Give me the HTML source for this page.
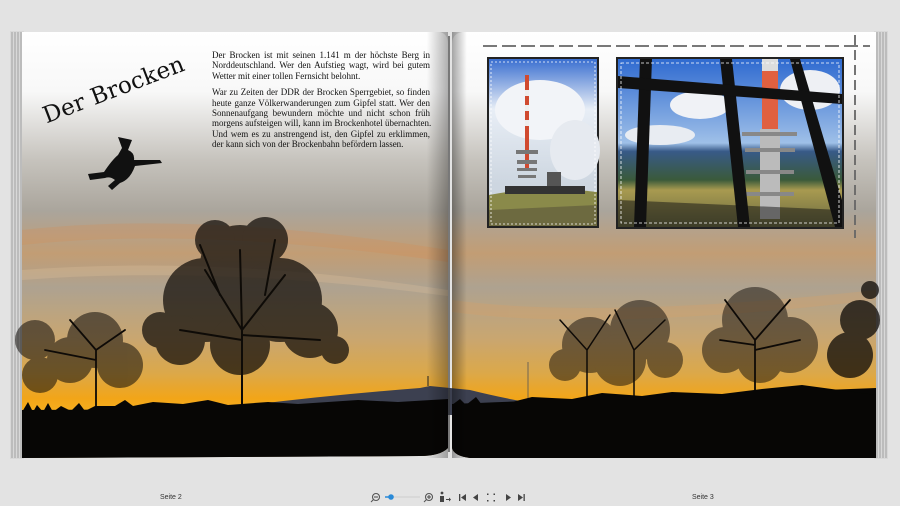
<!DOCTYPE html>
<html><head><meta charset="utf-8"><style>
html,body{margin:0;padding:0;width:900px;height:506px;overflow:hidden;background:#e3e3e3;font-family:"Liberation Sans",sans-serif}
svg{position:absolute;left:0;top:0}
.txt{position:absolute;left:212px;top:50px;width:218px;font-family:"Liberation Serif",serif;font-size:9px;line-height:10.4px;color:#111}
.txt div{text-align:justify;text-align-last:justify;white-space:nowrap;height:10.4px;overflow:visible}
.txt div.l{text-align-last:left}
.gap{height:6px!important}
.title{position:absolute;left:44px;top:104px;font-family:"DejaVu Serif",serif;font-size:23px;color:#111;transform:rotate(-21deg);transform-origin:0 50%;letter-spacing:0.2px}
.lbl{position:absolute;top:494px;font-size:7px;color:#333}
</style></head><body>
<svg width="900" height="506" viewBox="0 0 900 506">
<defs>
<linearGradient id="sky" x1="0" y1="0" x2="0" y2="1">
<stop offset="0" stop-color="#ffffff"/>
<stop offset="0.14" stop-color="#f8f8f8"/>
<stop offset="0.3" stop-color="#c6c3bd"/>
<stop offset="0.42" stop-color="#aaa59c"/>
<stop offset="0.52" stop-color="#c29d74"/>
<stop offset="0.6" stop-color="#aea290"/>
<stop offset="0.72" stop-color="#c9a670"/>
<stop offset="0.8" stop-color="#dba84a"/>
<stop offset="0.86" stop-color="#f2a518"/>
<stop offset="0.9" stop-color="#f7b020"/>
<stop offset="1" stop-color="#3a2a10"/>
</linearGradient>
<linearGradient id="spineL" x1="0" x2="1">
<stop offset="0.95" stop-color="#000" stop-opacity="0"/>
<stop offset="1" stop-color="#000" stop-opacity="0.3"/>
</linearGradient>
<linearGradient id="spineR" x1="0" x2="1">
<stop offset="0" stop-color="#000" stop-opacity="0.35"/>
<stop offset="0.035" stop-color="#000" stop-opacity="0"/>
</linearGradient>
<linearGradient id="p1sky" x1="0" y1="0" x2="0" y2="1"><stop offset="0" stop-color="#3a6fd0"/><stop offset="0.3" stop-color="#e8eef6"/><stop offset="0.75" stop-color="#cdd6e0"/></linearGradient>
<linearGradient id="p2sky" x1="0" y1="0" x2="0" y2="1"><stop offset="0" stop-color="#2f6ad0"/><stop offset="0.5" stop-color="#9fc0e8"/><stop offset="0.55" stop-color="#385a88"/><stop offset="0.72" stop-color="#3a5a3a"/><stop offset="0.78" stop-color="#a89a50"/><stop offset="1" stop-color="#6a6a40"/></linearGradient>
</defs>
<rect x="10" y="31" width="14" height="428" fill="#d8d8d8"/>
<g stroke="#a0a0a0" stroke-width="1"><line x1="12" y1="32" x2="12" y2="458"/><line x1="15" y1="32" x2="15" y2="458"/><line x1="18" y1="32" x2="18" y2="458"/><line x1="21" y1="32" x2="21" y2="458"/></g>
<rect x="874" y="31" width="14" height="428" fill="#d8d8d8"/>
<g stroke="#a0a0a0" stroke-width="1"><line x1="877" y1="32" x2="877" y2="458"/><line x1="880" y1="32" x2="880" y2="458"/><line x1="883" y1="32" x2="883" y2="458"/><line x1="886" y1="32" x2="886" y2="458"/></g>
<path d="M22 32 L440 32 Q448 34 448 44 L448 448 Q440 456 420 456 L22 458 Z" fill="url(#sky)"/>
<path d="M452 44 Q452 34 462 32 L876 32 L876 458 L470 458 Q454 456 452 448 Z" fill="url(#sky)"/>
<g opacity="0.25">
<path d="M22 230 Q200 210 448 250 L448 262 Q200 226 22 245Z" fill="#d88a50"/>
<path d="M452 300 Q600 320 876 290 L876 300 Q600 332 452 312Z" fill="#e0a060"/>
<path d="M22 270 Q220 255 448 290 L448 296 Q220 265 22 280Z" fill="#e8c8a0"/>
</g>
<path d="M250 405 Q330 395 420 388 L430 386 L470 390 Q510 400 560 408 L560 415 L250 415Z" fill="#3c4050"/>
<line x1="428" y1="386" x2="428" y2="376" stroke="#222" stroke-width="1"/>
<line x1="528" y1="400" x2="528" y2="362" stroke="#555" stroke-width="0.8"/>
<path d="M22 410 L448 408 L448 448 Q440 456 420 456 L22 458Z" fill="#070605"/>
<path d="M452 404 Q600 398 700 395 L876 388 L876 458 L470 458 Q454 456 452 448Z" fill="#070605"/>
<g stroke="#0c0906" fill="none" stroke-linecap="round">
<path d="M242 410 L242 330 L205 270 M242 330 L285 275 M242 340 L180 330 M242 335 L320 340 M220 295 L200 245 M265 295 L275 240 M242 330 L240 250" stroke-width="2"/>
<path d="M96 410 L96 350 L70 320 M96 350 L125 330 M96 360 L45 350" stroke-width="1.8"/>
<path d="M587 402 L587 350 L560 320 M587 350 L610 315 M634 400 L634 350 L615 310 M634 350 L665 320" stroke-width="1.5"/>
<path d="M755 398 L755 340 L725 300 M755 340 L790 300 M755 350 L800 340 M755 345 L720 340" stroke-width="1.8"/>
</g>
<g fill="#100c08" opacity="0.72">
<circle cx="240" cy="265" r="40"/><circle cx="205" cy="300" r="42"/><circle cx="280" cy="300" r="42"/>
<circle cx="215" cy="240" r="20"/><circle cx="265" cy="240" r="23"/><circle cx="310" cy="330" r="28"/>
<circle cx="180" cy="340" r="25"/><circle cx="240" cy="345" r="30"/><circle cx="335" cy="350" r="14"/>
<circle cx="160" cy="330" r="18"/>
</g>
<g fill="#100c08" opacity="0.55">
<circle cx="95" cy="340" r="28"/><circle cx="70" cy="360" r="23"/><circle cx="120" cy="365" r="23"/><circle cx="35" cy="340" r="20"/><circle cx="40" cy="375" r="18"/>
</g>
<g fill="#100c08" opacity="0.5">
<circle cx="590" cy="345" r="28"/><circle cx="640" cy="330" r="30"/><circle cx="620" cy="360" r="26"/><circle cx="665" cy="360" r="18"/><circle cx="565" cy="365" r="16"/>
<circle cx="755" cy="320" r="33"/><circle cx="790" cy="345" r="28"/><circle cx="725" cy="350" r="23"/><circle cx="760" cy="360" r="23"/>
</g>
<g fill="#0c0906" opacity="0.75">
<circle cx="860" cy="320" r="20"/><circle cx="850" cy="355" r="23"/><circle cx="870" cy="290" r="9"/>
</g>
<path d="M22 412 l6-10 5 10 4-7 6 7 5-9 5 9 8-6 10 5 8-8 6 8 10-5 20 0 10-6 8 6 20-4 30 2 25-4 20 5 40-3 30 2 60-4 40 2 50-3 L448 412Z" fill="#070605"/>
<path d="M452 405 l8-6 6 6 10-8 6 8 30-3 20-5 40 2 30-6 40 3 30-4 50 2 40-5 40 -4 L876 395 L876 410 L452 410Z" fill="#070605"/>
<rect x="22" y="32" width="426" height="426" fill="url(#spineL)"/>
<rect x="452" y="32" width="424" height="426" fill="url(#spineR)"/>
<line x1="449" y1="36" x2="449" y2="452" stroke="#333" stroke-width="1.2"/>
<g fill="#111">
<path d="M118 137 L132 140 L128 150 Q135 153 134 160 L160 160 L162 163 L135 166 Q130 180 120 183 L112 190 L108 186 L115 180 Q110 176 105 178 L90 180 L88 174 L104 172 Q112 160 118 155 L122 148 Z"/>
</g>
<line x1="483" y1="46" x2="870" y2="46" stroke="#666" stroke-width="1.8" stroke-dasharray="14,5"/>
<line x1="855" y1="35" x2="855" y2="238" stroke="#666" stroke-width="1.8" stroke-dasharray="10,5"/>
<rect x="487" y="57" width="112" height="171" fill="#222"/>
<rect x="489" y="59" width="108" height="167" fill="url(#p1sky)"/>
<ellipse cx="540" cy="110" rx="45" ry="30" fill="#f2f4f8"/><ellipse cx="575" cy="150" rx="25" ry="30" fill="#e6eaf0"/>
<path d="M489 195 Q540 185 597 192 L597 226 L489 226Z" fill="#8a8a4a"/>
<path d="M489 210 L597 205 L597 226 L489 226Z" fill="#6d6a40"/>
<rect x="525" y="75" width="4" height="95" fill="#d04a30"/>
<rect x="525" y="90" width="4" height="6" fill="#eee"/><rect x="525" y="105" width="4" height="6" fill="#eee"/><rect x="525" y="120" width="4" height="6" fill="#eee"/>
<g fill="#777"><rect x="516" y="150" width="22" height="4"/><rect x="517" y="160" width="20" height="4"/><rect x="517" y="168" width="20" height="3"/><rect x="518" y="175" width="18" height="3"/></g>
<rect x="547" y="172" width="14" height="20" fill="#555"/><rect x="505" y="186" width="80" height="8" fill="#333"/>
<rect x="491" y="62" width="104" height="162" fill="none" stroke="#fff" stroke-width="0.8" stroke-dasharray="2,2"/>
<rect x="616" y="57" width="228" height="172" fill="#222"/>
<rect x="618" y="59" width="224" height="168" fill="url(#p2sky)"/>
<ellipse cx="700" cy="105" rx="30" ry="14" fill="#f0f2f6"/><ellipse cx="660" cy="135" rx="35" ry="10" fill="#e8ecf2"/><ellipse cx="810" cy="90" rx="30" ry="20" fill="#eef0f4"/>
<rect x="762" y="59" width="16" height="70" fill="#e06040"/><rect x="762" y="59" width="16" height="12" fill="#ddd"/>
<rect x="760" y="129" width="20" height="90" fill="#bbb"/>
<g fill="#888"><rect x="742" y="132" width="55" height="4"/><rect x="745" y="148" width="50" height="4"/><rect x="746" y="170" width="48" height="4"/><rect x="746" y="192" width="48" height="4"/></g>
<g fill="#111">
<path d="M640 59 L652 59 L646 227 L634 227Z"/>
<path d="M720 59 L732 59 L750 227 L738 227Z"/>
<path d="M790 59 L800 59 L842 200 L842 227 L835 227Z"/>
<path d="M618 76 L842 94 L842 104 L618 88Z"/>
<path d="M618 200 L842 210 L842 227 L618 227Z" opacity="0.5"/>
</g>
<rect x="621" y="63" width="218" height="160" fill="none" stroke="#fff" stroke-width="0.8" stroke-dasharray="3,2"/>
<g fill="none" stroke="#555" stroke-width="1.1">
<circle cx="376" cy="497" r="3.5"/><line x1="374" y1="497" x2="378" y2="497"/><line x1="373.5" y1="499.5" x2="371" y2="502"/>
<circle cx="429" cy="497" r="3.5"/><line x1="427" y1="497" x2="431" y2="497"/><line x1="429" y1="495" x2="429" y2="499"/><line x1="426.5" y1="499.5" x2="424" y2="502"/>
</g>
<line x1="385" y1="497" x2="420" y2="497" stroke="#ccc" stroke-width="1"/>
<line x1="385" y1="497" x2="391" y2="497" stroke="#2a8ad8" stroke-width="1.5"/>
<circle cx="391" cy="497" r="2.8" fill="#2a8ad8"/>
<g fill="#444">
<circle cx="442" cy="493" r="1.4"/><rect x="440" y="496" width="4" height="6"/><path d="M446 499 L449 499 L449 497.5 L451 499.5 L449 501.5 L449 500 L446 500Z"/>
<rect x="459" y="494" width="1.3" height="7"/><path d="M466 494 L466 501 L461 497.5Z"/>
<path d="M478 494 L478 501 L473 497.5Z"/>
<rect x="487" y="493.5" width="1.5" height="1.5"/><rect x="493.5" y="493.5" width="1.5" height="1.5"/><rect x="487" y="500" width="1.5" height="1.5"/><rect x="493.5" y="500" width="1.5" height="1.5"/>
<path d="M506 494 L506 501 L511 497.5Z"/>
<path d="M518 494 L518 501 L523 497.5Z"/><rect x="523.5" y="494" width="1.3" height="7"/>
</g>
</svg>
<div class="title">Der Brocken</div>
<div class="txt">
<div>Der Brocken ist mit seinen 1.141 m der höchste Berg in</div>
<div>Norddeutschland. Wer den Aufstieg wagt, wird bei gutem</div>
<div class="l">Wetter mit einer tollen Fernsicht belohnt.</div>
<div class="gap"></div>
<div>War zu Zeiten der DDR der Brocken Sperrgebiet, so finden</div>
<div>heute ganze Völkerwanderungen zum Gipfel statt. Wer den</div>
<div>Sonnenaufgang bewundern möchte und nicht schon früh</div>
<div>morgens aufsteigen will, kann im Brockenhotel übernachten.</div>
<div>Und wem es zu anstrengend ist, den Gipfel zu erklimmen,</div>
<div class="l">der kann sich von der Brockenbahn befördern lassen.</div>
</div>
<div class="lbl" style="left:160px">Seite 2</div>
<div class="lbl" style="left:692px">Seite 3</div>
</body></html>
